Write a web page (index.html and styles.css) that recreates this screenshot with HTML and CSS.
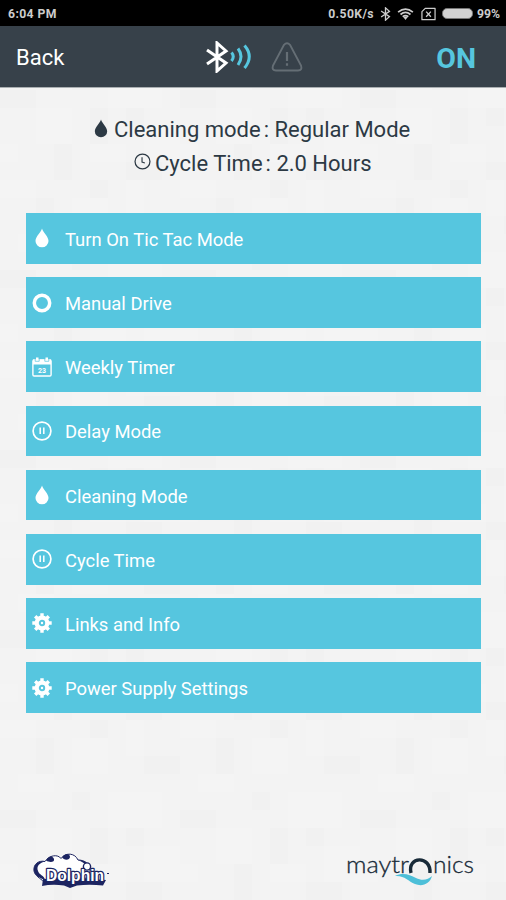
FILE: index.html
```html
<!DOCTYPE html>
<html lang="en">
<head>
<meta charset="utf-8">
<title>Dolphin remote</title>
<link rel="stylesheet" href="styles.css">
</head>
<body>
<svg class="defs" aria-hidden="true">
  <symbol id="drop" viewBox="0 0 14 20"><path d="M7 .5C6 4.500 .5 8.500 .5 13a6.500 6.300 0 0 0 13 0C13.500 8.500 8 4.500 7 .5Z" fill="currentColor"/></symbol>
  <symbol id="pause" viewBox="0 0 20 20"><circle cx="10" cy="10" r="8.900" fill="none" stroke="currentColor" stroke-width="1.700"/><path d="M8.200 6.500v6.500M11.800 6.500v6.500" stroke="currentColor" stroke-width="1.500"/></symbol>
  <symbol id="ring" viewBox="0 0 20 20"><circle cx="10" cy="10" r="7.700" fill="none" stroke="currentColor" stroke-width="3.500"/></symbol>
  <symbol id="gear" viewBox="0 0 20 20"><circle cx="10" cy="10" r="5.300" fill="none" stroke="currentColor" stroke-width="4.200"/><path d="M10 .3v4M10 15.700v4M.3 10h4M15.700 10h4M3.200 3.200l2.800 2.800M14 14l2.800 2.800M16.800 3.200L14 6M6 14l-2.800 2.800" stroke="currentColor" stroke-width="3.400"/><circle cx="10" cy="10" r="1.200" fill="currentColor"/></symbol>
  <symbol id="bt" viewBox="0 0 24 32"><path d="M2 9l19 13-9 8V2l9 8L2 23" fill="none" stroke="currentColor" stroke-width="3"/></symbol>
</svg>
<div class="screen">
  <svg class="mosaic" viewBox="0 0 506 900" aria-hidden="true">
    <defs>
      <pattern id="tiles" width="180" height="180" patternUnits="userSpaceOnUse">
        <path d="M0 0h36v18H0zM72 18h36v36H72zM126 0h18v36h-18zM18 54h36v18H18zM108 72h54v36h-54zM36 108h36v36H36zM0 144h18v18H0zM90 144h36v18H90zM144 126h36v36h-36z" fill="#f7f7f7"/>
        <path d="M36 18h18v36H36zM90 0h18v18H90zM144 36h36v18h-36zM0 90h36v18H0zM72 72h18v18H72zM90 108h18v36H90zM126 108h18v18h-18zM54 144h18v36H54zM126 162h36v18h-36z" fill="#efeff0"/>
      </pattern>
    </defs>
    <rect width="506" height="900" fill="url(#tiles)"/>
  </svg>
  <div class="status">
    <span class="clock">6:04 PM</span>
    <span class="rate">0.50K/s</span>
    <svg class="s-bt"><use href="#bt"/></svg>
    <svg class="s-wifi" viewBox="0 0 18 13"><g fill="none" stroke="#ccc" stroke-width="1.900"><path d="M1 4.500Q9-2 17 4.500M3.600 7Q9 2.500 14.400 7M6 9.500Q9 7 12 9.500"/></g><path d="M6.800 10L9 13l2.200-3Q9 8.500 6.800 10Z" fill="#ccc"/></svg>
    <svg class="s-sim" viewBox="0 0 16 14"><path d="M4.500 1H15v12H1V4.500Z" fill="none" stroke="#ccc" stroke-width="1.300" stroke-linejoin="round"/><path d="M5.500 4.500l5 5.500m0-5.500l-5 5.500" stroke="#ccc" stroke-width="1.400"/></svg>
    <span class="battery"></span>
    <span class="percent">99%</span>
  </div>
  <header class="bar">
    <span class="back">Back</span>
    <svg class="b-bt"><use href="#bt"/></svg>
    <svg class="waves" viewBox="0 0 22 24"><g fill="none" stroke="#56c6df" stroke-width="3"><path d="M1.500 8Q5 12 1.500 16.500M8 4Q14 12 8 20.500M14.500 1Q24 12 14.500 23.500"/></g></svg>
    <svg class="warn" viewBox="0 0 32 30"><path d="M13 2.800Q16-.4 19 2.800L30 23.500Q31.600 28.500 27 28.500H5Q.4 28.500 2 23.500Z" fill="none" stroke="#656e75" stroke-width="1.900"/><path d="M16 10v9M16 21.200v2.600" stroke="#656e75" stroke-width="2.200"/></svg>
    <span class="power">ON</span>
  </header>
  <main>
    <section class="info">
      <div class="line"><svg class="i-drop"><use href="#drop"/></svg><span>Cleaning mode<i></i>: Regular Mode</span></div>
      <div class="line"><svg class="i-clock" viewBox="0 0 18 18"><circle cx="9" cy="9" r="7.900" fill="none" stroke="currentColor" stroke-width="1.300"/><path d="M8.500 4.500V9.500l3 1" fill="none" stroke="currentColor" stroke-width="1.200"/></svg><span>Cycle Time<i></i>: 2.0 Hours</span></div>
    </section>
    <nav class="menu">
      <a class="item"><svg><use href="#drop"/></svg><span>Turn On Tic Tac Mode</span></a>
      <a class="item"><svg><use href="#ring"/></svg><span>Manual Drive</span></a>
      <a class="item"><svg viewBox="0 0 20 20"><rect x=".9" y="3" width="18.200" height="16" rx="1.200" fill="none" stroke="currentColor" stroke-width="1.400"/><path d="M1 2.500h18v5H1zM4 .5h2.500v3H4zM13.500 .5H16v3h-2.500z" fill="currentColor"/><path d="M3.200 2v2.300h4V2M12.800 2v2.300h4V2" fill="none" stroke="#56c6df" stroke-width=".7"/><text x="10" y="15.500" text-anchor="middle" class="day">23</text></svg><span>Weekly Timer</span></a>
      <a class="item"><svg><use href="#pause"/></svg><span>Delay Mode</span></a>
      <a class="item"><svg><use href="#drop"/></svg><span>Cleaning Mode</span></a>
      <a class="item"><svg><use href="#pause"/></svg><span>Cycle Time</span></a>
      <a class="item"><svg><use href="#gear"/></svg><span>Links and Info</span></a>
      <a class="item"><svg><use href="#gear"/></svg><span>Power Supply Settings</span></a>
    </nav>
  </main>
  <footer class="brands">
    <svg class="dolphin" viewBox="0 0 80 40">
      <path d="M12 31C8 27 3 25 2 20C1 13 7 9 13 10.500C17 4 26 3 29 7.500C34 1 43 2 46 9C53 9 58 13 58 20L56 27Z" fill="#fff" stroke="#1c2461" stroke-width="1"/>
      <path d="M2 20C1 13 7 9 13 10.500C8 11.500 4 15 6 20C7 24 12 24 13 29C8 27 3 25 2 20ZM14 9.500C17 4 21 5 22 8C23 11 18 12 14 9.500ZM30 6C34 1 38 3 38 6C38 9 32 10 30 6ZM46 9C53 9 58 13 58 18C55 14 52 12 46 9Z" fill="#1c2461"/>
      <path d="M11 28Q40 26 74 29L71 34.500Q57 33 45 34.500L38 37 32 34.500Q20 33 10 35Z" fill="#1c2461"/>
      <circle cx="55" cy="15.500" r="3.600" fill="#fff" stroke="#1c2461" stroke-width="1.400"/>
      <text x="14" y="30" textLength="58" lengthAdjust="spacingAndGlyphs" class="dolphin-word">Dolphin</text>
      <path d="M75 22.500h2" stroke="#1c2461"/>
    </svg>
    <svg class="maytronics" viewBox="0 0 130 36">
      <text x="1" y="21" textLength="63" lengthAdjust="spacingAndGlyphs">maytr</text>
      <path d="M66 21C62 4 86 3 85 21" fill="none" stroke="#182a38" stroke-width="3.400"/>
      <text x="88" y="21" textLength="41" lengthAdjust="spacingAndGlyphs">nics</text>
      <path d="M50 24C58 20 65 23 71 26C77 29 83 28 87 24C85 32 77 35 70 32C63 29 59 23 50 24Z" fill="#4dbfd8"/>
    </svg>
  </footer>
</div>
</body>
</html>
```
FILE: styles.css
```css
* { box-sizing: border-box; }
body { margin: 0; font-family: Roboto, "Liberation Sans", sans-serif; }
.defs { position: absolute; width: 0; height: 0; }
svg { display: block; flex: none; }
span { white-space: nowrap; }
.screen {
  position: relative; z-index: 0;
  width: 506px; height: 900px; display: flex; flex-direction: column;
  background-color: #f3f3f3;
}
.mosaic { position: absolute; inset: 0; z-index: -1; width: 506px; height: 900px; opacity: .45; }
.status {
  height: 26px; background: #000; color: #ccc; display: flex; align-items: center;
  padding: 1px 6px 0 8px; font-size: 12.200px; font-weight: 700;
}
.clock { letter-spacing: .4px; }
.rate { margin-left: auto; letter-spacing: .4px; }
.s-bt { width: 11px; height: 14px; margin-left: 6px; }
.s-wifi { width: 17px; height: 12px; margin-left: 6px; }
.s-sim { width: 15px; height: 14px; margin-left: 7px; }
.battery { width: 31px; height: 11px; margin-left: 6px; border-radius: 5px; background: #d2d2d2; border: 1px solid #777; }
.percent { margin-left: 4px; }
.bar {
  height: 62px; background: #37414a; display: flex; align-items: center;
  padding: 0 30px 0 16px; border-bottom: 1px solid #aaafb2;
}
.back { width: 189px; color: #fff; font-size: 22px; padding-top: 2px; }
.b-bt { width: 24px; height: 32px; color: #fff; }
.waves { width: 22px; height: 25px; margin-left: 1px; }
.warn { width: 32px; height: 30px; margin-left: 19px; }
.power { margin-left: auto; color: #56c6df; font-size: 28.500px; font-weight: 700; padding-top: 3px; }
.info { height: 125px; padding-top: 25px; color: #2c3944; }
.line { height: 33.500px; display: flex; align-items: center; font-size: 22px; }
.line i { display: inline-block; width: 3px; }
.line:first-child { padding-left: 94px; }
.line:last-child { padding-left: 134px; }
.i-drop { width: 14px; height: 19px; margin: -3px 6px 0 0; }
.i-clock { width: 17px; height: 17px; margin: -3px 4px 0 0; }
.menu { display: flex; flex-direction: column; gap: 13.500px; padding: 0 25.500px 0 26px; }
.item { height: 50.700px; background: #56c6df; display: flex; align-items: center; color: #fff; font-size: 18.400px; padding-left: 6px; }
.item svg { width: 20px; height: 20px; margin-right: 13px; }
.item span { padding-top: 2px; }
.day { font: 700 7px Roboto, sans-serif; fill: currentColor; }
.brands { margin-top: auto; height: 55px; display: flex; justify-content: space-between; padding: 5px 31px 0 32px; }
.dolphin { width: 80px; height: 40px; margin-top: 1px; }
.dolphin-word { font: 700 17px "Liberation Sans", sans-serif; fill: #fff; stroke: #1c2461; stroke-width: 2.600px; stroke-linejoin: round; paint-order: stroke; }
.maytronics { width: 130px; height: 36px; margin-top: 2px; overflow: visible; font: 300 23px Lato, sans-serif; fill: #182a38; stroke-width: .3px; }
.maytronics text { stroke: #182a38; }
```
